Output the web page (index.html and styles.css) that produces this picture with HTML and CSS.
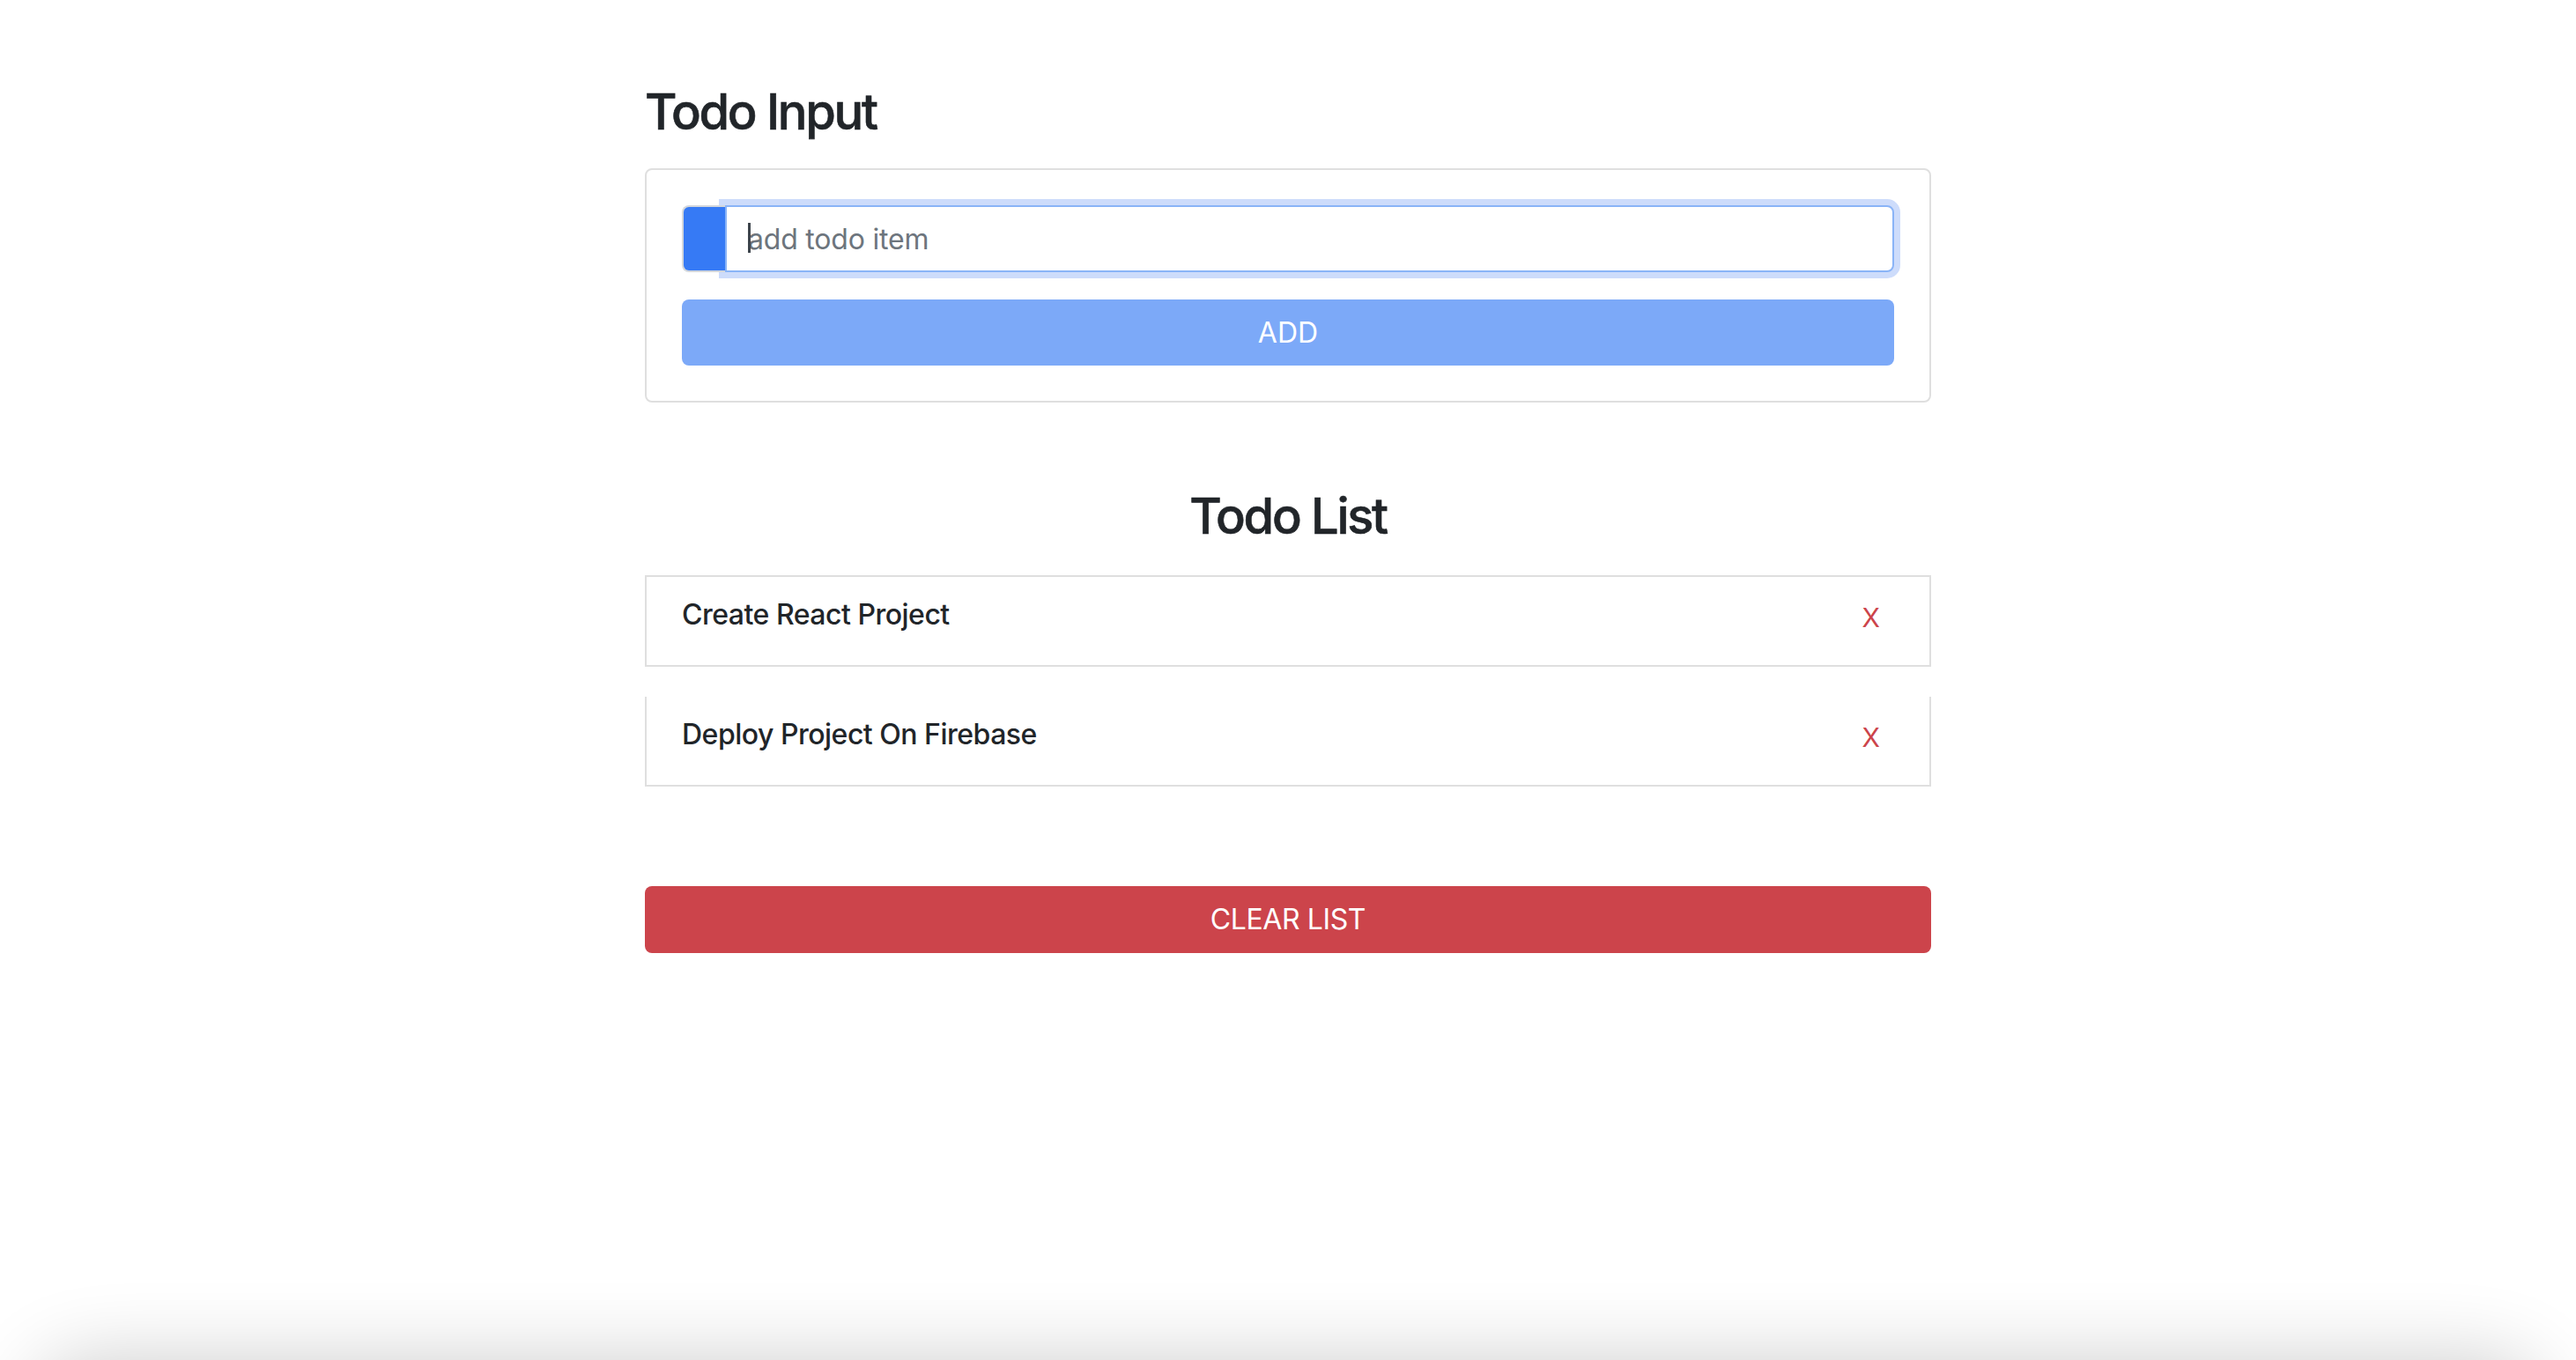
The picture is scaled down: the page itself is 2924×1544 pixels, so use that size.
FILE: index.html
```html
<!DOCTYPE html>
<html lang="en">
<head>
<meta charset="utf-8">
<title>Todo</title>
<link rel="stylesheet" href="styles.css">
</head>
<body>
<main class="main">
  <h3 class="heading">Todo Input</h3>
  <div class="card">
    <form class="form">
      <div class="input-group">
        <div class="prepend"></div>
        <div class="input-wrap">
          <input class="input" type="text" placeholder="add todo item">
          <span class="caret"></span>
        </div>
      </div>
      <button type="button" class="btn-add">ADD</button>
    </form>
  </div>
  <h3 class="heading heading-center">Todo List</h3>
  <ul class="list">
    <li class="item">
      <h6 class="item-title">Create React Project</h6>
      <span class="delete">X</span>
    </li>
    <li class="item item-next">
      <h6 class="item-title">Deploy Project On Firebase</h6>
      <span class="delete">X</span>
    </li>
  </ul>
  <button type="button" class="btn-clear">CLEAR LIST</button>
</main>
<div class="bottom-shade"></div>
</body>
</html>
```
FILE: styles.css
```css
html, body {
  margin: 0;
  padding: 0;
  background: #ffffff;
  height: 100%;
  overflow: hidden;
}
body {
  font-family: Inter, "Liberation Sans", sans-serif;
  color: #212529;
}
.main {
  width: 1460px;
  margin: 0 auto;
  padding-top: 94px;
}
.heading {
  margin: 0 0 30px;
  font-size: 56px;
  font-weight: 500;
  line-height: 1.2;
  letter-spacing: -2.3px;
  -webkit-text-stroke: 0.6px #212529;
}
.heading-center {
  text-align: center;
  margin-top: 96px;
  margin-bottom: 33px;
}
.card {
  border: 2px solid #dfdfdf;
  border-radius: 8px;
  padding: 40px;
}
.form {
  display: flex;
  flex-direction: column;
  gap: 31px;
}
.input-group {
  display: flex;
  height: 76px;
}
.prepend {
  width: 49px;
  box-sizing: border-box;
  background: #367af5;
  border: 2px solid #d3d7dc;
  border-right: 0;
  border-radius: 8px 0 0 8px;
  position: relative;
  z-index: 2;
}
.input-wrap {
  flex: 1;
  position: relative;
  display: flex;
}
.input {
  flex: 1;
  box-sizing: border-box;
  height: 76px;
  margin: 0;
  border: 2px solid #8ab4f7;
  border-radius: 0 8px 8px 0;
  padding: 12px 24px;
  font-family: Inter, "Liberation Sans", sans-serif;
  font-size: 32px;
  line-height: 48px;
  letter-spacing: -0.2px;
  color: #495057;
  outline: none;
  box-shadow: 0 0 0 7px #cddcfb;
}
.input::placeholder {
  color: #6d757d;
  opacity: 1;
}
.caret {
  position: absolute;
  left: 26px;
  top: 20px;
  width: 3px;
  height: 34px;
  background: #3d444c;
}
.btn-add {
  height: 75px;
  border: 0;
  border-radius: 8px;
  background: #7ca9f8;
  color: #ffffff;
  font-family: Inter, "Liberation Sans", sans-serif;
  font-size: 32px;
  line-height: 48px;
  padding: 0;
}
.list {
  list-style: none;
  margin: 0;
  padding: 0;
  display: flex;
  flex-direction: column;
  gap: 34px;
}
.item {
  box-sizing: border-box;
  height: 104px;
  border: 2px solid #dfdfdf;
  padding: 24px 40px;
  display: flex;
  justify-content: space-between;
  align-items: flex-start;
}
.item-next {
  border-top-width: 0;
  height: 102px;
}
.item-title {
  margin: 0;
  font-size: 32px;
  font-weight: 500;
  line-height: 38px;
  letter-spacing: -0.5px;
}
.delete {
  color: #cc444b;
  font-size: 30px;
  line-height: 45px;
  margin-right: 16px;
}
.btn-clear {
  display: block;
  width: 100%;
  height: 76px;
  margin-top: 113px;
  border: 0;
  border-radius: 8px;
  background: #cc444b;
  color: #ffffff;
  font-family: Inter, "Liberation Sans", sans-serif;
  font-size: 32px;
  line-height: 48px;
  letter-spacing: -0.4px;
  padding: 0;
}
.bottom-shade {
  position: fixed;
  left: 40px;
  right: 40px;
  top: 1544px;
  height: 200px;
  border-radius: 60px;
  box-shadow: 0 0 90px rgba(0, 0, 0, 0.2);
}
```
